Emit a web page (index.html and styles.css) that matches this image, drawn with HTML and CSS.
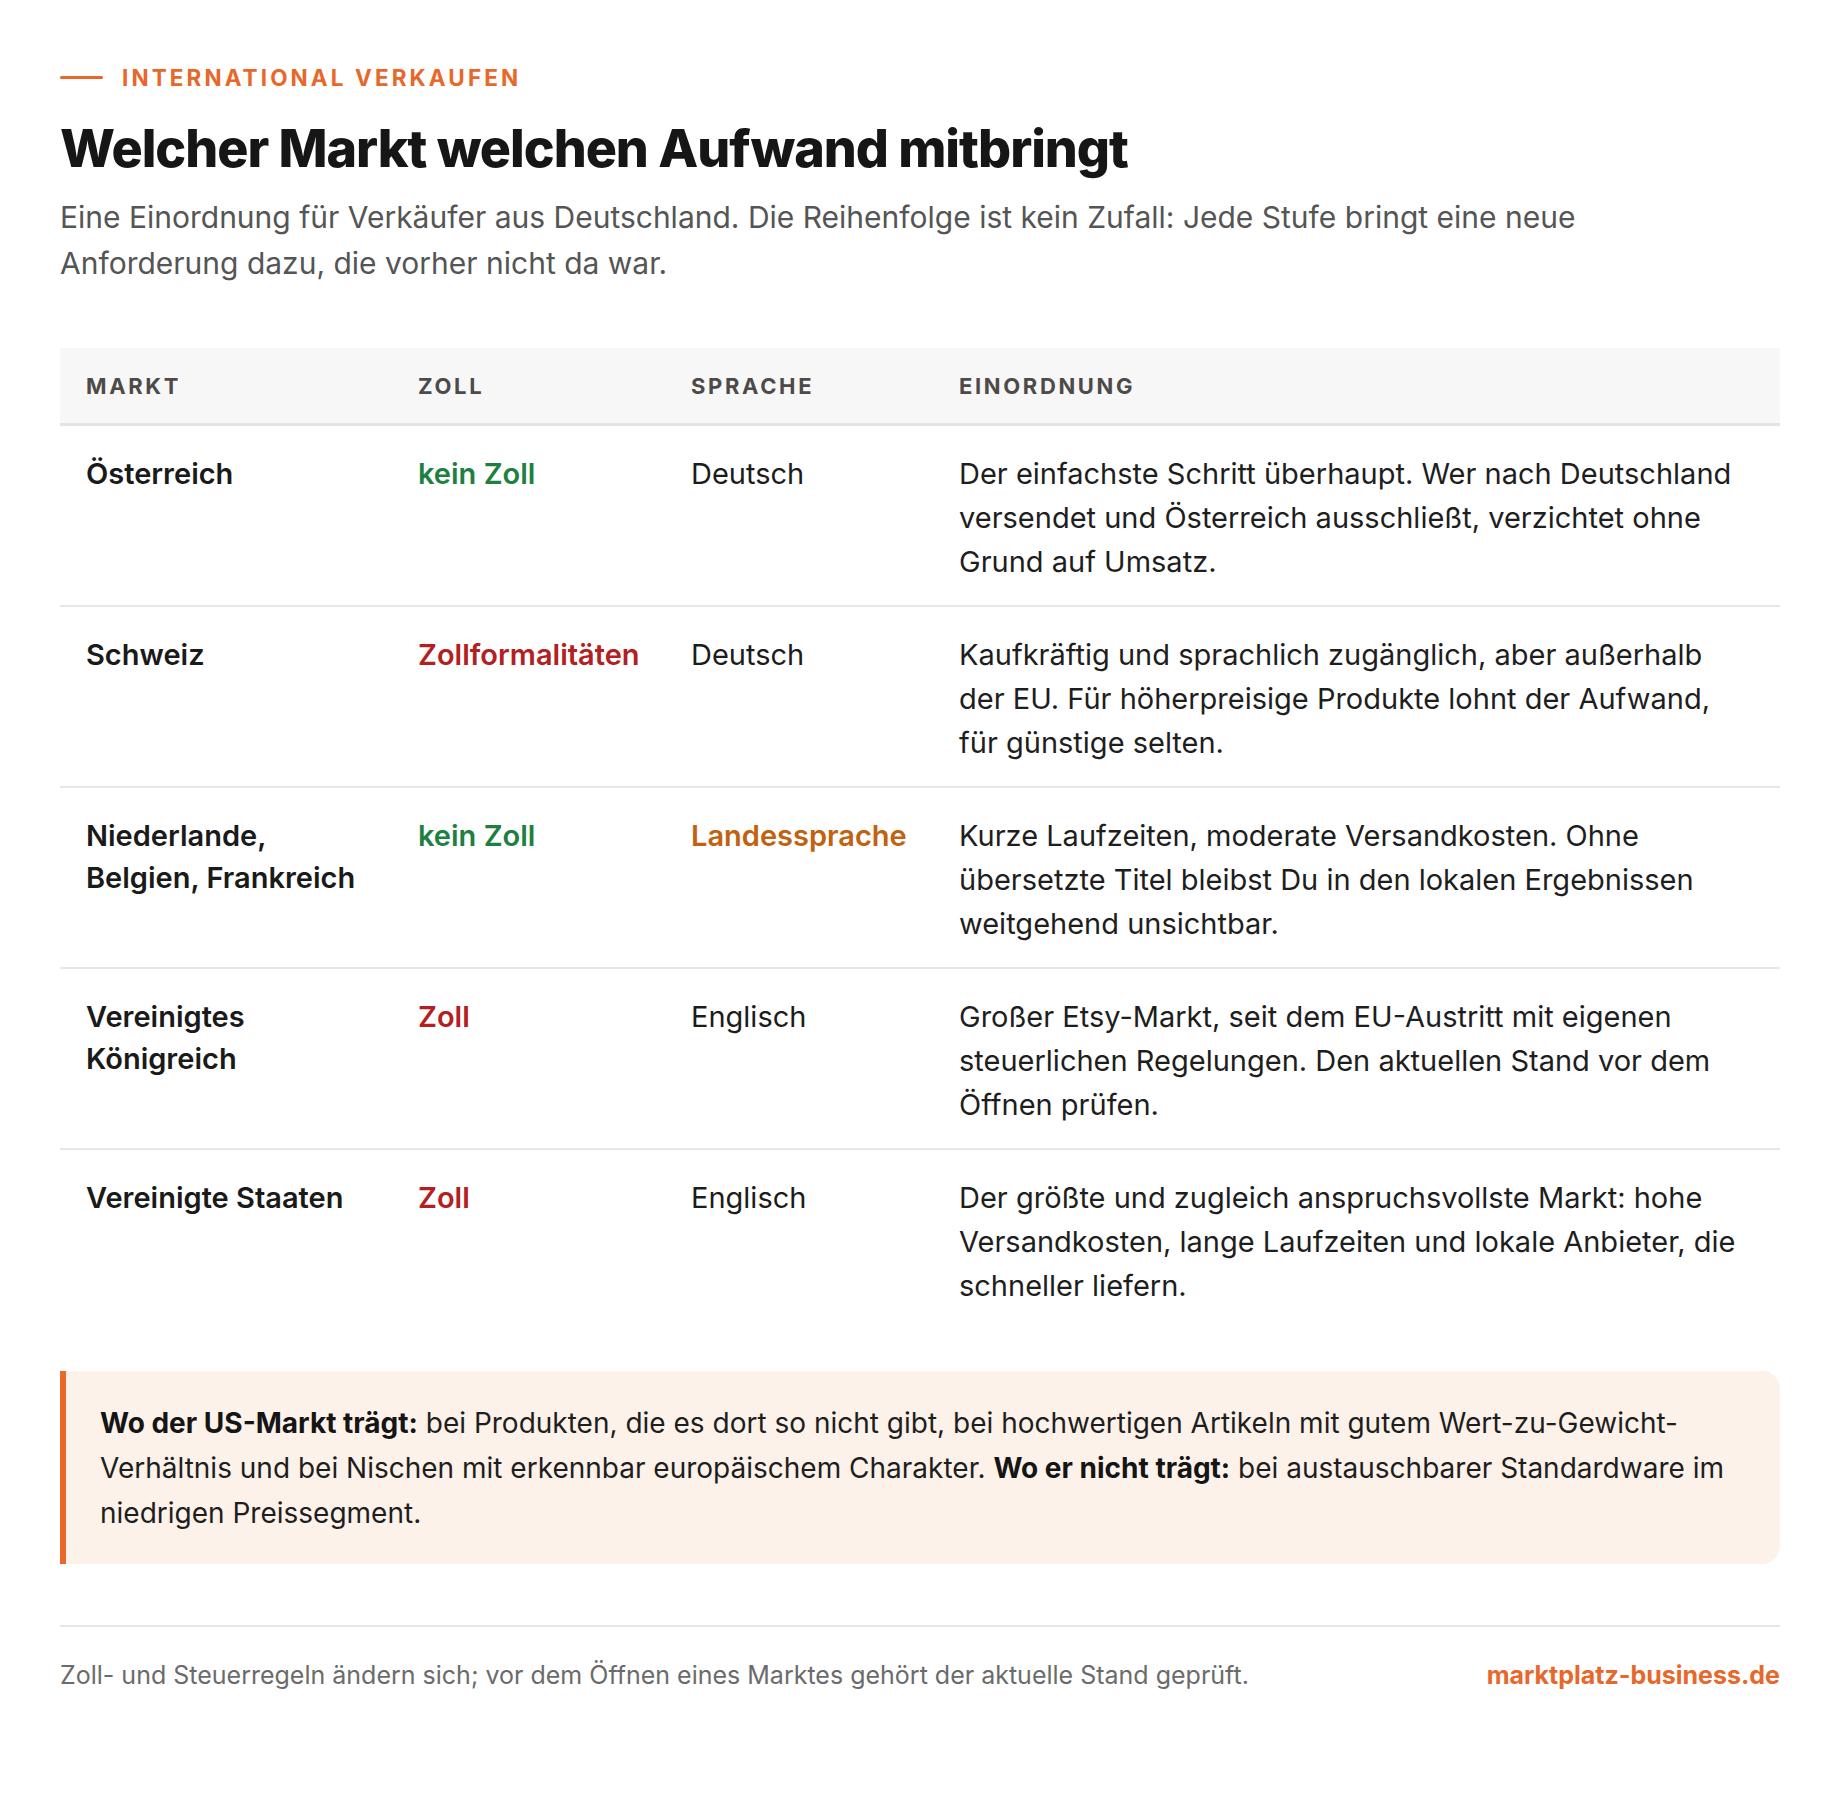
FILE: index.html
```html
<!DOCTYPE html>
<html lang="de">
<head>
<meta charset="utf-8">
<title>Welcher Markt welchen Aufwand mitbringt</title>
<link rel="stylesheet" href="styles.css">
</head>
<body>
<main class="page">
  <div class="eyebrow"><span class="eyebrow-line"></span><span class="eyebrow-text">International verkaufen</span></div>
  <h1 class="title">Welcher Markt welchen Aufwand mitbringt</h1>
  <p class="lead">Eine Einordnung für Verkäufer aus Deutschland. Die Reihenfolge ist kein Zufall: Jede Stufe bringt eine neue Anforderung dazu, die vorher nicht da war.</p>

  <table class="markets">
    <colgroup>
      <col class="c-markt">
      <col class="c-zoll">
      <col class="c-sprache">
      <col class="c-einordnung">
    </colgroup>
    <thead>
      <tr><th>Markt</th><th>Zoll</th><th>Sprache</th><th>Einordnung</th></tr>
    </thead>
    <tbody>
      <tr>
        <td class="name">Österreich</td>
        <td class="tag ok">kein Zoll</td>
        <td class="lang">Deutsch</td>
        <td class="desc">Der einfachste Schritt überhaupt. Wer nach Deutschland versendet und Österreich ausschließt, verzichtet ohne Grund auf Umsatz.</td>
      </tr>
      <tr>
        <td class="name">Schweiz</td>
        <td class="tag bad">Zollformalitäten</td>
        <td class="lang">Deutsch</td>
        <td class="desc">Kaufkräftig und sprachlich zugänglich, aber außerhalb der EU. Für höherpreisige Produkte lohnt der Aufwand, für günstige selten.</td>
      </tr>
      <tr>
        <td class="name">Niederlande, Belgien, Frankreich</td>
        <td class="tag ok">kein Zoll</td>
        <td class="lang warn">Landessprache</td>
        <td class="desc">Kurze Laufzeiten, moderate Versandkosten. Ohne übersetzte Titel bleibst Du in den lokalen Ergebnissen weitgehend unsichtbar.</td>
      </tr>
      <tr>
        <td class="name">Vereinigtes Königreich</td>
        <td class="tag bad">Zoll</td>
        <td class="lang">Englisch</td>
        <td class="desc">Großer Etsy-Markt, seit dem EU-Austritt mit eigenen steuerlichen Regelungen. Den aktuellen Stand vor dem Öffnen prüfen.</td>
      </tr>
      <tr>
        <td class="name">Vereinigte Staaten</td>
        <td class="tag bad">Zoll</td>
        <td class="lang">Englisch</td>
        <td class="desc">Der größte und zugleich anspruchsvollste Markt: hohe Versandkosten, lange Laufzeiten und lokale Anbieter, die schneller liefern.</td>
      </tr>
    </tbody>
  </table>

  <div class="callout">
    <p><strong>Wo der US-Markt trägt:</strong> bei Produkten, die es dort so nicht gibt, bei hochwertigen Artikeln mit gutem Wert-zu-Gewicht-Verhältnis und bei Nischen mit erkennbar europäischem Charakter. <strong>Wo er nicht trägt:</strong> bei austauschbarer Standardware im niedrigen Preissegment.</p>
  </div>

  <footer class="foot">
    <span class="foot-note">Zoll- und Steuerregeln ändern sich; vor dem Öffnen eines Marktes gehört der aktuelle Stand geprüft.</span>
    <span class="foot-brand">marktplatz-business.de</span>
  </footer>
</main>
</body>
</html>
```

FILE: styles.css
```css
* { box-sizing: border-box; }

html, body {
  margin: 0;
  padding: 0;
  background: #ffffff;
}

body {
  font-family: Inter, "Noto Sans", "Liberation Sans", sans-serif;
  color: #1c1c1c;
}

.page {
  width: 1840px;
  padding: 62px 60px 80px 60px;
}

.eyebrow {
  display: flex;
  align-items: center;
  gap: 19px;
  height: 30px;
}

.eyebrow-line {
  display: block;
  width: 43px;
  height: 3px;
  background: #e8672a;
  border-radius: 2px;
}

.eyebrow-text {
  font-size: 22.5px;
  font-weight: 700;
  letter-spacing: 0.138em;
  text-transform: uppercase;
  color: #e8672a;
}

.title {
  margin: 24px 0 0 0;
  font-size: 52px;
  line-height: 66px;
  font-weight: 800;
  letter-spacing: -0.02em;
  color: #161616;
}

.lead {
  margin: 12px 0 0 0;
  max-width: 1600px;
  font-size: 30px;
  line-height: 46px;
  color: #555555;
}

.markets {
  width: 100%;
  margin-top: 62px;
  border-collapse: collapse;
  table-layout: fixed;
}

.c-markt { width: 332px; }
.c-zoll { width: 273px; }
.c-sprache { width: 268px; }

.markets th {
  background: #f7f7f7;
  border-bottom: 3px solid #e4e4e4;
  padding: 24px 26px 22px 26px;
  text-align: left;
  font-size: 22px;
  line-height: 29px;
  font-weight: 700;
  letter-spacing: 0.12em;
  text-transform: uppercase;
  color: #4e4a48;
}

.markets td {
  padding: 26px 26px 21px 26px;
  vertical-align: top;
  font-size: 29px;
  line-height: 44px;
  border-bottom: 2px solid #e7e7e7;
}

.markets tbody tr:last-child td {
  border-bottom: none;
}

.markets td.name {
  font-weight: 600;
  line-height: 42px;
  padding-top: 27px;
  color: #1a1a1a;
}

.markets td.tag,
.markets td.lang {
  white-space: nowrap;
}

.markets td.tag {
  font-weight: 600;
}

.ok { color: #1e8040; }
.bad { color: #b3201f; }
.markets td.warn { color: #c0620f; font-weight: 600; }

.desc { color: #1e1e1e; }

.callout {
  margin-top: 42px;
  background: #fdf2ea;
  border-left: 6px solid #e8672a;
  border-radius: 0 18px 18px 0;
  padding: 30px 40px 28px 34px;
}

.callout p {
  margin: 0;
  font-size: 28px;
  line-height: 45px;
  color: #1e1e1e;
}

.callout strong {
  font-weight: 700;
  color: #151515;
}

.foot {
  margin-top: 61px;
  border-top: 2px solid #e6e6e6;
  padding-top: 33px;
  display: flex;
  justify-content: space-between;
  align-items: baseline;
}

.foot-note {
  font-size: 25px;
  line-height: 30px;
  color: #6b6b6b;
}

.foot-brand {
  font-size: 25px;
  line-height: 30px;
  font-weight: 700;
  color: #e8672a;
}
```
